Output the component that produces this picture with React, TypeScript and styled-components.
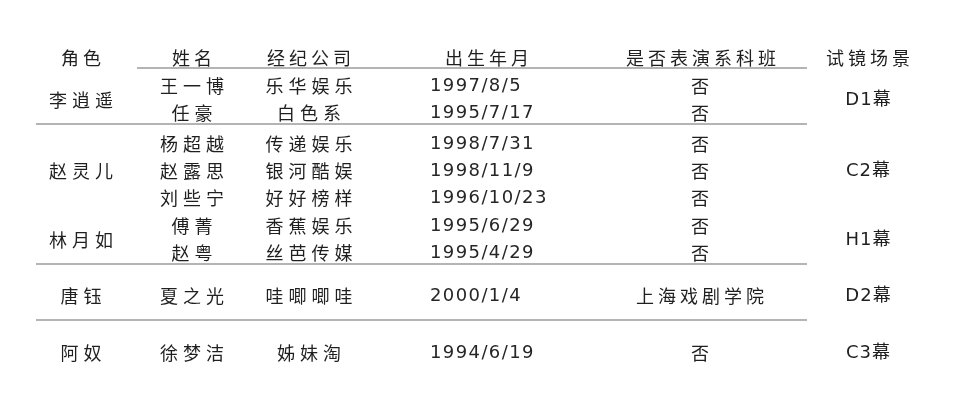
import React from 'react';
import styled, { createGlobalStyle } from 'styled-components';

const GlobalStyle = createGlobalStyle`
  html, body {
    margin: 0;
    padding: 0;
    background: #ffffff;
  }
  body {
    font-family: "Noto Sans CJK SC", sans-serif;
    color: #1f1f1f;
  }
`;

const COLUMNS = '90px 132px 102px 254px 174px 160px';
const CJK = '"Noto Sans CJK SC", sans-serif';
const LATIN = '"DejaVu Sans", "Noto Sans CJK SC", sans-serif';

interface Member {
  name: string;
  company: string;
  birth: string;
  trained: string;
}

interface CastGroup {
  role: string;
  scene: string;
  members: Member[];
  rowHeight: number;
  padTop: number;
  ruleAfter: boolean;
}

const groups: CastGroup[] = [
  {
    role: '李逍遥',
    scene: 'D1幕',
    rowHeight: 27,
    padTop: 0,
    ruleAfter: true,
    members: [
      { name: '王一博', company: '乐华娱乐', birth: '1997/8/5', trained: '否' },
      { name: '任豪', company: '白色系', birth: '1995/7/17', trained: '否' },
    ],
  },
  {
    role: '赵灵儿',
    scene: 'C2幕',
    rowHeight: 27,
    padTop: 2,
    ruleAfter: false,
    members: [
      { name: '杨超越', company: '传递娱乐', birth: '1998/7/31', trained: '否' },
      { name: '赵露思', company: '银河酷娱', birth: '1998/11/9', trained: '否' },
      { name: '刘些宁', company: '好好榜样', birth: '1996/10/23', trained: '否' },
    ],
  },
  {
    role: '林月如',
    scene: 'H1幕',
    rowHeight: 27,
    padTop: 1,
    ruleAfter: true,
    members: [
      { name: '傅菁', company: '香蕉娱乐', birth: '1995/6/29', trained: '否' },
      { name: '赵粤', company: '丝芭传媒', birth: '1995/4/29', trained: '否' },
    ],
  },
  {
    role: '唐钰',
    scene: 'D2幕',
    rowHeight: 54,
    padTop: 0,
    ruleAfter: true,
    members: [{ name: '夏之光', company: '哇唧唧哇', birth: '2000/1/4', trained: '上海戏剧学院' }],
  },
  {
    role: '阿奴',
    scene: 'C3幕',
    rowHeight: 56,
    padTop: 0,
    ruleAfter: false,
    members: [{ name: '徐梦洁', company: '姊妹淘', birth: '1994/6/19', trained: '否' }],
  },
];

const Page = styled.div`
  width: 959px;
  height: 401px;
  overflow: hidden;
  background: #ffffff;
`;

const Table = styled.div`
  padding: 42px 0 0 36px;
  filter: blur(0.3px);
`;

const HeaderRow = styled.div`
  display: grid;
  grid-template-columns: ${COLUMNS};
  grid-auto-rows: 25px;
`;

const Group = styled.div<{ $rowHeight: number; $padTop: number }>`
  display: grid;
  grid-template-columns: ${COLUMNS};
  grid-auto-rows: ${(p) => p.$rowHeight}px;
  padding-top: ${(p) => p.$padTop}px;
`;

const Rule = styled.div<{ $indent?: number }>`
  height: 2px;
  width: ${(p) => 771 - (p.$indent ?? 0)}px;
  margin-left: ${(p) => p.$indent ?? 0}px;
  background: #b4b4b4;
`;

const Cell = styled.div<{ $col: number; $span?: number }>`
  grid-column: ${(p) => p.$col};
  ${(p) => (p.$span ? `grid-row: 1 / span ${p.$span};` : '')}
  display: flex;
  align-items: center;
  justify-content: center;
  box-sizing: border-box;
  padding-top: 5px;
  font-family: ${CJK};
  font-size: 18px;
  line-height: 1;
  letter-spacing: 5px;
  padding-left: 5px;
  white-space: nowrap;
`;

const HeadCell = styled(Cell)`
  letter-spacing: 4px;
  padding-left: 4px;
`;

const BirthCell = styled(Cell)`
  justify-content: flex-start;
  padding-left: 70px;
  font-family: ${LATIN};
  letter-spacing: 1.4px;
  color: #262626;
`;

const FlagCell = styled(Cell)`
  letter-spacing: 4px;
  padding-left: 2px;
`;

const SceneCell = styled(Cell)`
  font-family: ${LATIN};
  letter-spacing: 1px;
  padding-left: 1px;
`;

const headers = ['角色', '姓名', '经纪公司', '出生年月', '是否表演系科班', '试镜场景'];

const App: React.FC = () => {
  return (
    <Page>
      <GlobalStyle />
      <Table>
        <HeaderRow>
          {headers.map((h, i) => (
            <HeadCell key={h} $col={i + 1}>
              {h}
            </HeadCell>
          ))}
        </HeaderRow>
        <Rule $indent={101} />
        {groups.map((g) => (
          <React.Fragment key={g.role}>
            <Group $rowHeight={g.rowHeight} $padTop={g.padTop}>
              <Cell $col={1} $span={g.members.length}>
                {g.role}
              </Cell>
              {g.members.map((m) => (
                <React.Fragment key={m.name}>
                  <Cell $col={2}>{m.name}</Cell>
                  <Cell $col={3}>{m.company}</Cell>
                  <BirthCell $col={4}>{m.birth}</BirthCell>
                  <FlagCell $col={5}>{m.trained}</FlagCell>
                </React.Fragment>
              ))}
              <SceneCell $col={6} $span={g.members.length}>
                {g.scene}
              </SceneCell>
            </Group>
            {g.ruleAfter && <Rule />}
          </React.Fragment>
        ))}
      </Table>
    </Page>
  );
};

export default App;
